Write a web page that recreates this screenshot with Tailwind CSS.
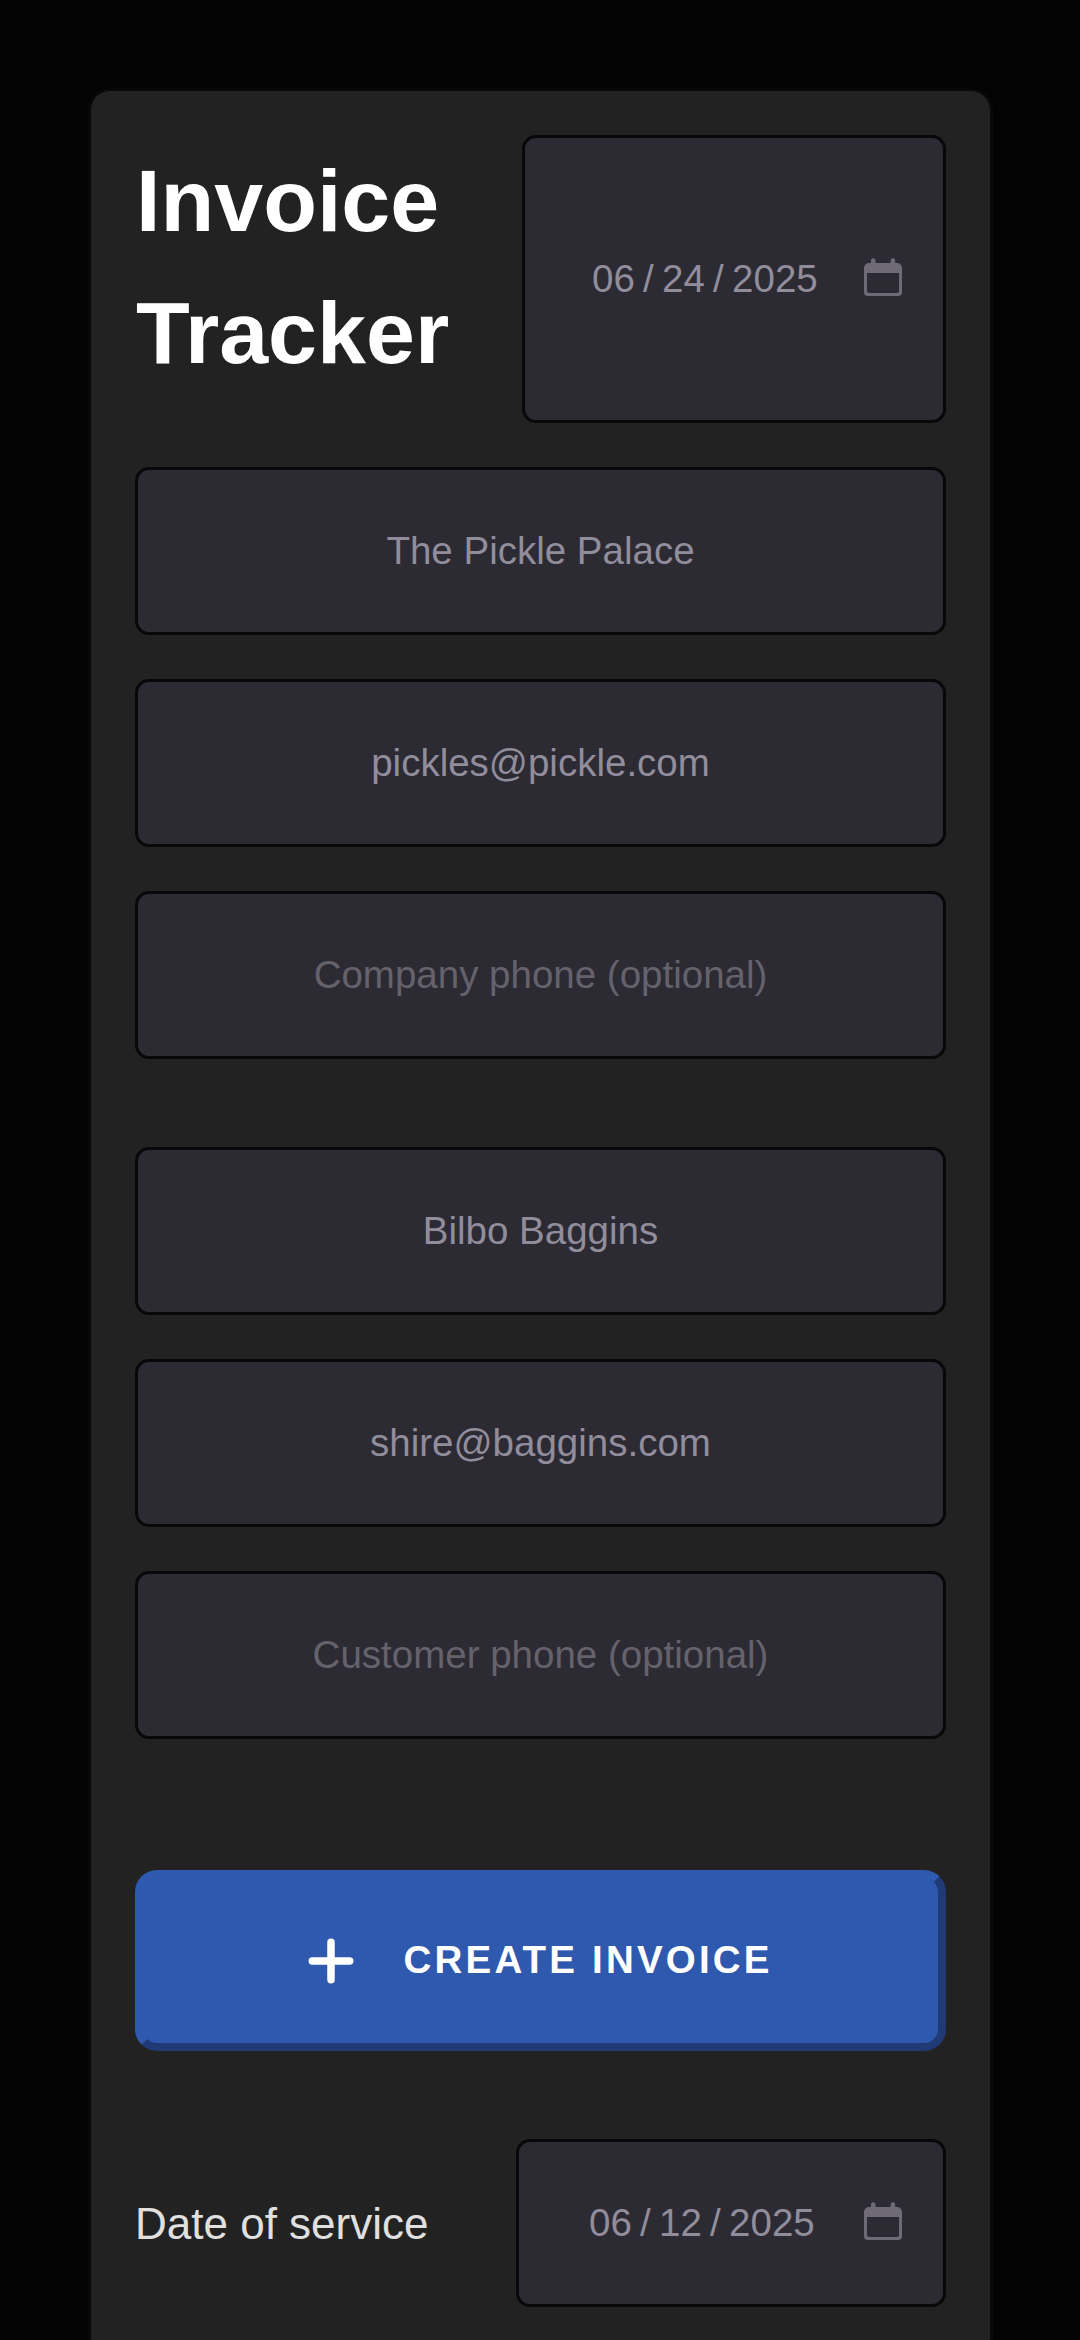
<!DOCTYPE html>
<html lang="en">
<head>
<meta charset="utf-8">
<title>Invoice Tracker</title>
<script src="https://cdn.jsdelivr.net/npm/@tailwindcss/browser@4"></script>
</head>
<body class="h-[2340px] overflow-hidden bg-[#030303] pr-[87px] pl-[88px] pt-[88px] font-['Arial','Liberation_Sans',sans-serif] text-[38.5px]">
<main class="flex h-[2252px] flex-col rounded-t-[22px] border-[3px] border-b-0 border-[#080808] bg-[#222222] px-[44px] pt-[44px]">
  <header class="flex justify-between">
    <h1 class="pl-px text-[88px] leading-[132px] font-bold text-white">Invoice<br>Tracker</h1>
    <div class="flex h-[288px] w-[424px] items-center rounded-[14px] border-[3px] border-[#08080b] bg-[#2c2a33] pl-[67px] text-[#918d9b]">
      <span>06</span><span class="mx-[8.25px]">/</span><span>24</span><span class="mx-[8.25px]">/</span><span>2025</span>
      <svg class="ml-[46px] h-[38px] w-[38px] -translate-y-[2px]" viewBox="0 0 38 38" fill="#6e6b76"><path fill-rule="evenodd" d="M5 5h2V2.500a2.300 2.300 0 0 1 4.600 0V5h15V2.500a2.300 2.300 0 0 1 4.600 0V5H33a5 5 0 0 1 5 5v24a4 4 0 0 1-4 4H4a4 4 0 0 1-4-4V10a5 5 0 0 1 5-5zM3 15v17.500a2.500 2.500 0 0 0 2.500 2.500h27a2.500 2.500 0 0 0 2.500-2.500V15z"/></svg>
    </div>
  </header>
  <section class="mt-[44px] flex flex-col gap-[44px] text-center text-[#918d9b]">
    <div class="flex h-[168px] items-center justify-center rounded-[14px] border-[3px] border-[#08080b] bg-[#2c2a33]">The Pickle Palace</div>
    <div class="flex h-[168px] items-center justify-center rounded-[14px] border-[3px] border-[#08080b] bg-[#2c2a33]">pickles@pickle.com</div>
    <div class="flex h-[168px] items-center justify-center rounded-[14px] border-[3px] border-[#08080b] bg-[#2c2a33] text-[#65626c]">Company phone (optional)</div>
  </section>
  <section class="mt-[88px] flex flex-col gap-[44px] text-center text-[#918d9b]">
    <div class="flex h-[168px] items-center justify-center rounded-[14px] border-[3px] border-[#08080b] bg-[#2c2a33]">Bilbo Baggins</div>
    <div class="flex h-[168px] items-center justify-center rounded-[14px] border-[3px] border-[#08080b] bg-[#2c2a33]">shire@baggins.com</div>
    <div class="flex h-[168px] items-center justify-center rounded-[14px] border-[3px] border-[#08080b] bg-[#2c2a33] text-[#65626c]">Customer phone (optional)</div>
  </section>
  <button class="mt-[131px] flex h-[181px] shrink-0 items-center rounded-[22px] border-8 border-t-[#2f59af] border-r-[#1f3a75] border-b-[#1f3a75] border-l-[#2f59af] bg-[#2f59af] pl-[165px] font-bold tracking-[3.2px] text-white">
    <svg class="mr-[49.5px] h-[46px] w-[46px]" viewBox="0 0 46 46" fill="none" stroke="#fff" stroke-width="7.500" stroke-linecap="round"><path d="M23 4.300v37.400M4.300 23h37.400"/></svg>
    <span class="pb-[2px]">CREATE INVOICE</span>
  </button>
  <div class="mt-[88px] flex items-center justify-between">
    <span class="pt-[2px] text-[44px] text-[#e0e0e0]">Date of service</span>
    <div class="flex h-[168px] w-[430px] items-center rounded-[14px] border-[3px] border-[#08080b] bg-[#2c2a33] pl-[70px] text-[#918d9b]">
      <span>06</span><span class="mx-[8.25px]">/</span><span>12</span><span class="mx-[8.25px]">/</span><span>2025</span>
      <svg class="ml-[49px] h-[38px] w-[38px] -translate-y-[2px]" viewBox="0 0 38 38" fill="#6e6b76"><path fill-rule="evenodd" d="M5 5h2V2.500a2.300 2.300 0 0 1 4.600 0V5h15V2.500a2.300 2.300 0 0 1 4.600 0V5H33a5 5 0 0 1 5 5v24a4 4 0 0 1-4 4H4a4 4 0 0 1-4-4V10a5 5 0 0 1 5-5zM3 15v17.500a2.500 2.500 0 0 0 2.500 2.500h27a2.500 2.500 0 0 0 2.500-2.500V15z"/></svg>
    </div>
  </div>
</main>
</body>
</html>
